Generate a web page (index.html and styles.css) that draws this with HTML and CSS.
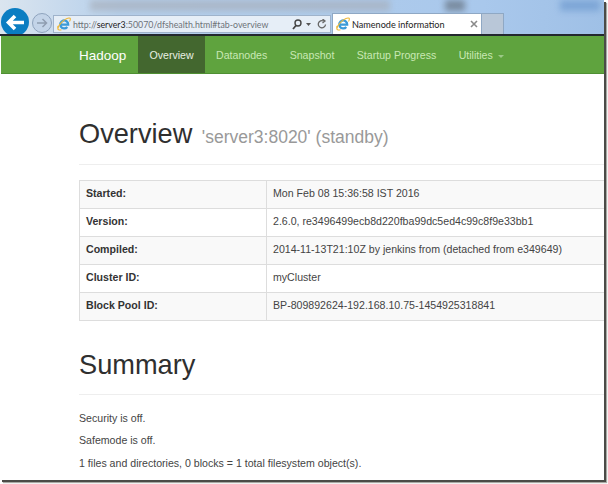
FILE: index.html
```html
<!DOCTYPE html>
<html lang="en">
<head>
<meta charset="utf-8">
<title>Namenode information</title>
<link rel="stylesheet" href="styles.css">
</head>
<body>
<div class="window">
  <header class="chrome">
    <div class="blur blur-a"></div>
    <div class="blur blur-b"></div>
    <div class="blur blur-c"></div>
    <div class="back"><svg width="20" height="17" viewBox="0 0 20 17"><path d="M19 8.500H4M10 2L3.500 8.500L10 15" fill="none" stroke="#fff" stroke-width="3.600"/></svg></div>
    <div class="forward"><svg width="12" height="12" viewBox="0 0 12 12"><path d="M1 6H10M6.500 2L10.500 6L6.500 10" fill="none" stroke="#8f9db0" stroke-width="1.500"/></svg></div>
    <div class="address">
      <svg class="ie" width="14" height="14" viewBox="0 0 14 14"><path d="M3.800 7.600H11.200A4 4 0 1 0 10.300 10" fill="none" stroke="#3b9ad8" stroke-width="2.300"/><path d="M1 12.500C0 10 6 2 12 1C14 .8 13.500 3 12.500 4.500M1 9C0 13 2 13.500 4.500 12.800" fill="none" stroke="#f0b93a" stroke-width="1.100"/></svg>
      <span class="url">http://<b>server3</b>:50070/dfshealth.html#tab-overview</span>
      <svg class="tool search" width="10" height="11" viewBox="0 0 10 11"><circle cx="6" cy="4" r="3" fill="none" stroke="#444" stroke-width="1.400"/><path d="M4 6.500L1 10" stroke="#444" stroke-width="1.800"/></svg>
      <svg class="tool caret" width="5" height="3" viewBox="0 0 5 3"><path d="M0 0H5L2.500 3Z" fill="#555"/></svg>
      <svg class="tool refresh" width="10" height="10" viewBox="0 0 10 10"><path d="M8.500 5.500A3.600 3.600 0 1 1 6.500 2M5.500 0L8 2L5.500 4" fill="none" stroke="#666" stroke-width="1.300"/></svg>
    </div>
    <div class="tab">
      <svg class="ie" width="14" height="14" viewBox="0 0 14 14"><path d="M3.800 7.600H11.200A4 4 0 1 0 10.300 10" fill="none" stroke="#3b9ad8" stroke-width="2.300"/><path d="M1 12.500C0 10 6 2 12 1C14 .8 13.500 3 12.500 4.500M1 9C0 13 2 13.500 4.500 12.800" fill="none" stroke="#f0b93a" stroke-width="1.100"/></svg>
      <span class="tab-title">Namenode information</span>
      <svg class="close" width="8" height="8" viewBox="0 0 8 8"><path d="M1 1L7 7M7 1L1 7" stroke="#8a8a8a" stroke-width="1.600"/></svg>
    </div>
    <div class="new-tab"></div>
  </header>
  <nav class="navbar">
    <a class="brand">Hadoop</a>
    <a class="nav-item active">Overview</a>
    <a class="nav-item">Datanodes</a>
    <a class="nav-item">Snapshot</a>
    <a class="nav-item">Startup Progress</a>
    <a class="nav-item">Utilities <i class="nav-caret"></i></a>
  </nav>
  <main class="content">
    <div class="page-header first">
      <h1>Overview <small>'server3:8020' (standby)</small></h1>
    </div>
    <table class="info">
      <tr><th>Started:</th><td>Mon Feb 08 15:36:58 IST 2016</td></tr>
      <tr><th>Version:</th><td>2.6.0, re3496499ecb8d220fba99dc5ed4c99c8f9e33bb1</td></tr>
      <tr><th>Compiled:</th><td>2014-11-13T21:10Z by jenkins from (detached from e349649)</td></tr>
      <tr><th>Cluster ID:</th><td>myCluster</td></tr>
      <tr><th>Block Pool ID:</th><td>BP-809892624-192.168.10.75-1454925318841</td></tr>
    </table>
    <div class="page-header second">
      <h1>Summary</h1>
    </div>
    <p>Security is off.</p>
    <p>Safemode is off.</p>
    <p>1 files and directories, 0 blocks = 1 total filesystem object(s).</p>
  </main>
</div>
</body>
</html>
```
FILE: styles.css
```css
* { box-sizing: border-box; }
html, body { margin: 0; padding: 0; }
body {
  width: 608px;
  height: 484px;
  overflow: hidden;
  background: #fff;
  font-family: "Liberation Sans", Arial, sans-serif;
}
.window {
  width: 604px;
  height: 480px;
  background: #fff;
  box-shadow: 2px 2px 0 #4b4b47, 3px 3px 1px #a9a9a4;
}
.chrome {
  position: relative;
  height: 36px;
  display: flex;
  align-items: flex-start;
  padding: 3px 0 0 1px;
  background: linear-gradient(90deg, #dbe5ef, #b5cfeb 20%, #a9c8ec 80%, #9fc0e6);
  border-bottom: 2px solid #23282e;
  overflow: hidden;
}
.blur { position: absolute; top: 0; height: 11px; filter: blur(3px); }
.blur-a { left: 90px; width: 300px; background: #a7aeb9; opacity: .65; }
.blur-b { left: 445px; width: 20px; background: #59636d; opacity: .6; }
.blur-c { left: 560px; width: 40px; background: #6f9bd0; opacity: .7; }
.back {
  position: relative;
  width: 28px;
  height: 28px;
  margin-top: 5px;
  border-radius: 50%;
  background: #0a7dc2;
  display: flex;
  align-items: center;
  justify-content: center;
}
.forward {
  position: relative;
  width: 20px;
  height: 20px;
  margin: 10px 0 0 3px;
  border-radius: 50%;
  background: #c3d4e8;
  border: 1px solid #8ea3bd;
  display: flex;
  align-items: center;
  justify-content: center;
}
.address {
  position: relative;
  width: 278px;
  height: 18px;
  margin: 12px 0 0 1px;
  padding: 0 3px;
  display: flex;
  align-items: center;
  background: #e6eef7;
  border: 1px solid #9fb3cb;
}
.ie { flex: none; }
.url {
  margin-left: 2px;
  flex: 1;
  white-space: nowrap;
  font-family: Lato, sans-serif;
  font-size: 8.800px;
  color: #6d7278;
}
.url b { font-weight: 400; color: #1c1c1c; }
.tool { flex: none; }
.tool.caret { margin-left: 4px; }
.tool.refresh { margin-left: 6px; }
.tab {
  position: relative;
  width: 150px;
  height: 21px;
  margin: 10px 0 0 1px;
  padding: 0 3px 0 3px;
  display: flex;
  align-items: center;
  background: #fff;
  border: 1px solid #8fa8c4;
  border-bottom: 0;
}
.tab-title {
  flex: 1;
  margin-left: 2px;
  white-space: nowrap;
  font-family: Lato, sans-serif;
  font-size: 9.100px;
  color: #222;
}
.new-tab {
  position: relative;
  width: 22px;
  height: 21px;
  margin-top: 10px;
  background: #b9c7d8;
  border: 1px solid #8fa8c4;
  border-left: 0;
  border-bottom: 0;
}
.navbar {
  height: 38px;
  display: flex;
  align-items: stretch;
  padding-left: 67px;
  margin-left: 1px;
  background: #5fa33e;
  border-bottom: 1px solid #4f8f33;
}
.brand {
  padding: 0 12px 0 11px;
  line-height: 39px;
  font-size: 13.500px;
  color: #fff;
}
.nav-item {
  padding: 0 11.200px;
  line-height: 39px;
  font-size: 10.600px;
  color: #c9e8b5;
}
.nav-item.active { background: #43672f; color: #e8f0e2; }
.nav-caret {
  display: inline-block;
  margin-left: 2px;
  vertical-align: middle;
  border: 3px solid transparent;
  border-top-color: #9cc987;
  border-bottom: 0;
}
.content { padding-left: 79px; height: 406px; overflow: hidden; color: #444; }
.page-header { padding-bottom: 8px; border-bottom: 1px solid #eee; }
.page-header.first { margin-top: 35px; margin-bottom: 15px; height: 56px; padding-top: 5px; }
.page-header.second { margin-top: 24px; margin-bottom: 16px; height: 50px; }
h1 {
  margin: 0;
  font-size: 27.200px;
  line-height: 40px;
  font-weight: 400;
  color: #2f2f2f;
}
small { font-size: 17.500px; color: #999; margin-left: 2px; }
.info {
  width: 540px;
  border-collapse: collapse;
  font-size: 10.600px;
}
.info th, .info td {
  height: 28px;
  padding: 0 6px 3px;
  text-align: left;
  border: 1px solid #ddd;
}
.info th { width: 187px; font-weight: 700; color: #333; }
.info td { color: #444; border-right: 0; }
.info tr:nth-child(odd) th, .info tr:nth-child(odd) td { background: #f9f9f9; }
.info tr:nth-child(even) td { background: #fff; }
p { margin: 0 0 7.400px; font-size: 10.600px; line-height: 15px; color: #444; }
```
